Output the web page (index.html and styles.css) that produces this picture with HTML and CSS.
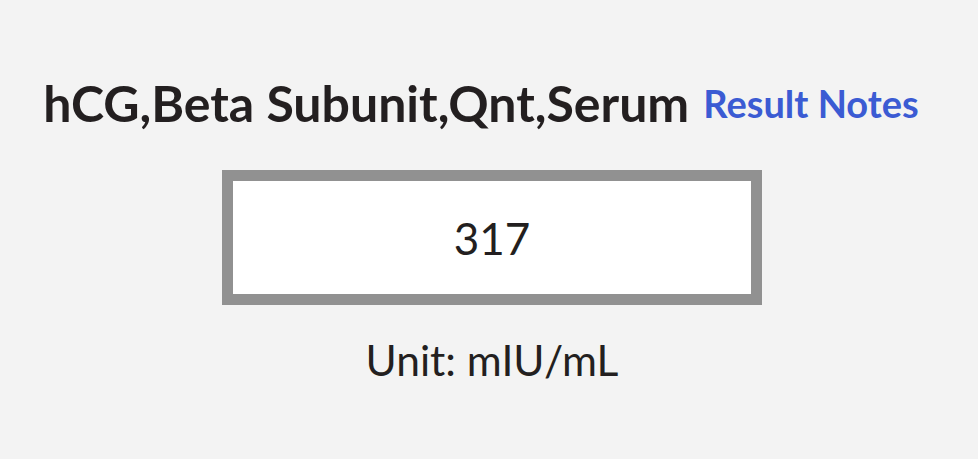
FILE: index.html
```html
<!DOCTYPE html>
<html lang="en">
<head>
<meta charset="utf-8">
<title>Result</title>
<link rel="stylesheet" href="styles.css">
</head>
<body>
<main class="result">
  <div class="result-header">
    <h1 class="result-title">hCG,Beta Subunit,Qnt,Serum</h1>
    <a class="result-notes" href="#">Result Notes</a>
  </div>
  <div class="result-value">317</div>
  <p class="result-unit">Unit: mIU/mL</p>
</main>
</body>
</html>
```

FILE: styles.css
```css
html, body {
  margin: 0;
  padding: 0;
  background: #f3f3f3;
}

body {
  font-family: Lato, "Noto Sans", sans-serif;
  color: #231f20;
  width: 978px;
  height: 459px;
  overflow: hidden;
}

.result {
  display: flex;
  flex-direction: column;
  align-items: center;
  padding-top: 76px;
  padding-left: 6px;
}

.result-header {
  display: flex;
  align-items: center;
  gap: 14px;
  padding-right: 22px;
  height: 54px;
}

.result-title {
  margin: 0;
  font-size: 50px;
  font-weight: 700;
  line-height: 54px;
  color: #231f20;
}

.result-notes {
  font-size: 38px;
  font-weight: 700;
  color: #3b5bd3;
  text-decoration: none;
  line-height: 54px;
}

.result-value {
  box-sizing: border-box;
  width: 540px;
  height: 135px;
  margin-top: 40px;
  border: 11px solid #919191;
  background: #ffffff;
  display: flex;
  align-items: center;
  justify-content: center;
  font-size: 44px;
  color: #231f20;
}

.result-unit {
  margin: 28px 0 0;
  font-size: 42.5px;
  line-height: 54px;
  color: #231f20;
}
```
